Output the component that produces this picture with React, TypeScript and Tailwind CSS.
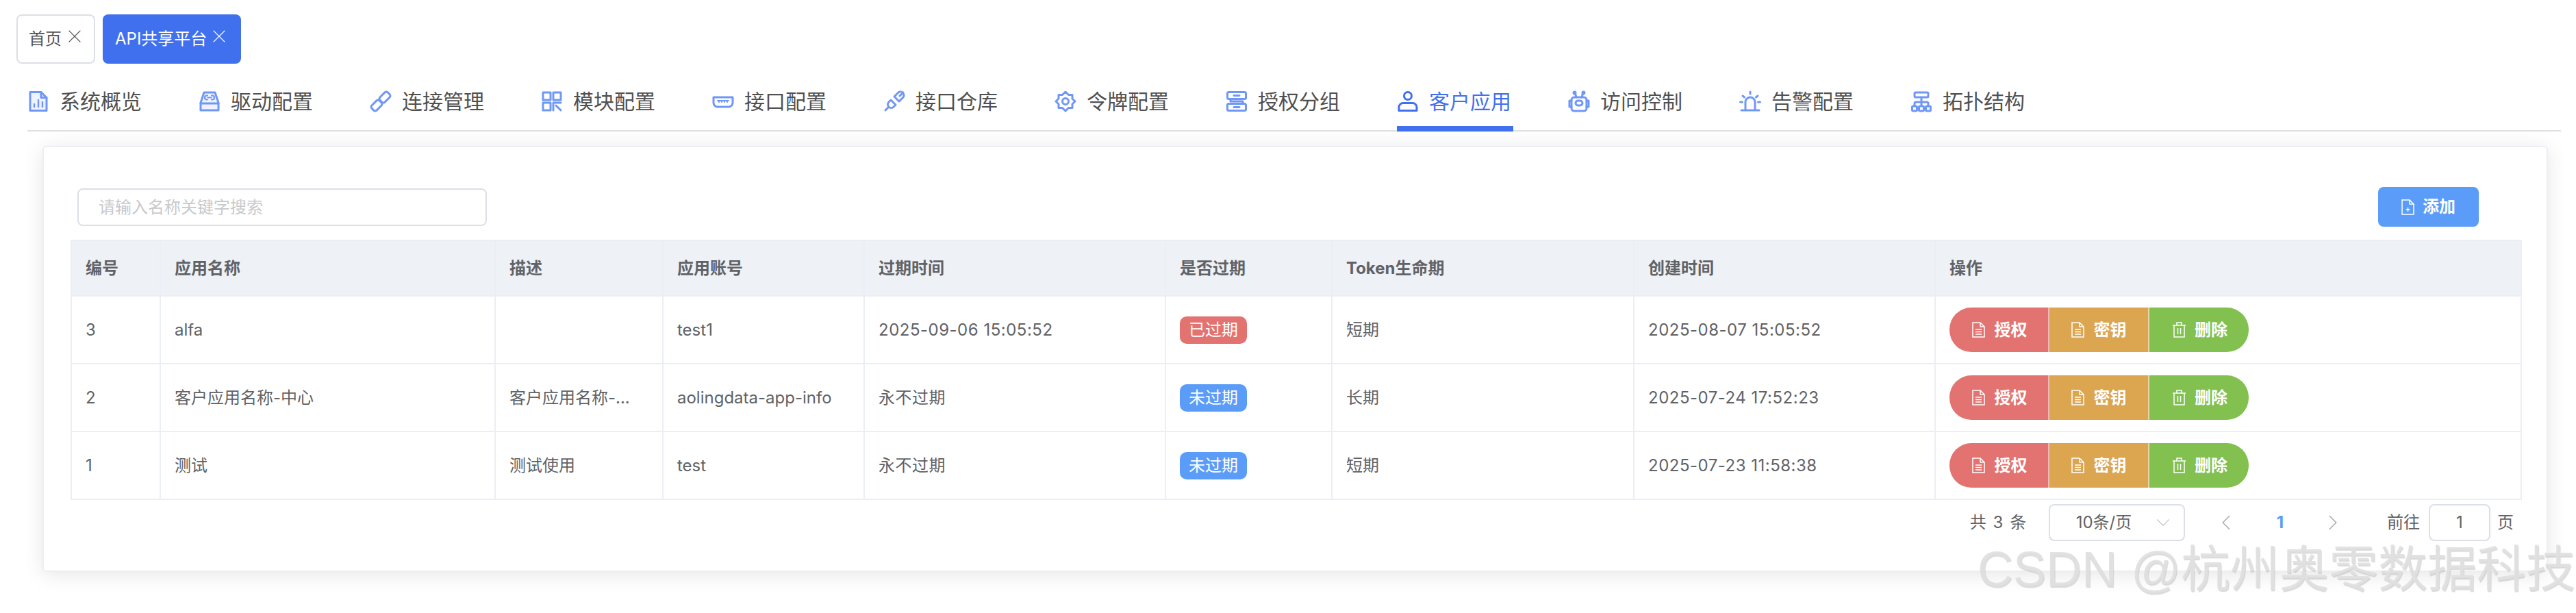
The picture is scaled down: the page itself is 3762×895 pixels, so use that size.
import React from 'react';
import { ChevronDown, ChevronLeft, ChevronRight, X } from 'lucide-react';

const IconBase: React.FC<{ children: React.ReactNode }> = ({ children }) => (
  <svg className="h-8 w-8 shrink-0" viewBox="0 0 32 32" fill="none" stroke="currentColor" strokeWidth={3} strokeLinecap="round" strokeLinejoin="round">
    {children}
  </svg>
);

const navItems: { label: string; icon: React.ReactNode }[] = [
  { label: '系统概览', icon: <IconBase><path d="M4 2.500h16l8 8V29.500H4z" fill="#eef3ff" /><path d="M20 2.500v8h8" /><path d="M10 24v-4M16 24v-10M22 24v-7" strokeWidth={2.4} /></IconBase> },
  { label: '驱动配置', icon: <IconBase><path d="M8 3h16l5 15v11H3V18z" fill="#eef3ff" /><path d="M3 19h26" /><path d="M13 7.500h-1a3 3 0 0 0 0 6h1M19 7.500h1a3 3 0 0 1 0 6h-1M13.500 10.500h5" strokeWidth={2.2} /></IconBase> },
  { label: '连接管理', icon: <IconBase><rect x="2" y="17" width="16" height="10" rx="3" transform="rotate(-45 10 22)" /><rect x="14" y="5" width="16" height="10" rx="3" transform="rotate(-45 22 10)" /></IconBase> },
  { label: '模块配置', icon: <IconBase><rect x="3" y="3" width="11" height="11" /><rect x="18" y="3" width="11" height="11" /><rect x="3" y="18" width="11" height="11" /><path d="M18 18h11M18 18v11M29 29l-7-7" /></IconBase> },
  { label: '接口配置', icon: <IconBase><path d="M2 10h28v8a6 6 0 0 1-6 6H8a6 6 0 0 1-6-6z" /><path d="M8 15h16M10 15v2M14 15v2M18 15v2M22 15v2" strokeWidth={2} /></IconBase> },
  { label: '接口仓库', icon: <IconBase><path d="M29 3l-5 5M22 3l-6 6 7 7 6-6a5 5 0 0 0-7-7z" /><path d="M3 29l5-5M8 24a5 5 0 0 1 0-7l3-3 7 7-3 3a5 5 0 0 1-7 0z" /></IconBase> },
  { label: '令牌配置', icon: <IconBase><path d="M16 2l4.500 4.500H26V12l4 4-4 4v5.500h-5.500L16 30l-4.500-4.500H6V20l-4-4 4-4V6.500h5.500z" /><circle cx="16" cy="16" r="4.500" /></IconBase> },
  { label: '授权分组', icon: <IconBase><rect x="2.500" y="2.500" width="27" height="10" rx="2" /><rect x="2.500" y="19.500" width="27" height="10" rx="2" /><path d="M7 12.500V16h18v3.500M12 7.500h8M12 24.500h8" /></IconBase> },
  { label: '客户应用', icon: <IconBase><circle cx="16" cy="8" r="5.500" /><path d="M3 29.500v-5a6 6 0 0 1 6-6h14a6 6 0 0 1 6 6v5z" /></IconBase> },
  { label: '访问控制', icon: <IconBase><path d="M10 3l2 7M22 3l-2 7" /><circle cx="9.500" cy="3.500" r="1.500" fill="currentColor" /><circle cx="22.500" cy="3.500" r="1.500" fill="currentColor" /><rect x="5" y="10" width="22" height="20" rx="4" /><rect x="11" y="15" width="10" height="7" rx="3.500" /><path d="M5 15H2v9h3M27 15h3v9h-3" /></IconBase> },
  { label: '告警配置', icon: <IconBase><path d="M3 29h26M9 29V17a7 7 0 0 1 14 0v12" /><path d="M16 2v3M5 8l2.500 2M27 8l-2.500 2M1.500 17h3M27.500 17h3" /></IconBase> },
  { label: '拓扑结构', icon: <IconBase><rect x="6" y="3" width="20" height="7" rx="1.500" /><path d="M16 10v12M6 23v-4a2 2 0 0 1 2-2h16a2 2 0 0 1 2 2v4" /><rect x="2.500" y="23" width="7" height="7" rx="1.500" /><rect x="12.500" y="23" width="7" height="7" rx="1.500" /><rect x="22.500" y="23" width="7" height="7" rx="1.500" /></IconBase> },
];

const DocIcon: React.FC<{ plus?: boolean }> = ({ plus }) => (
  <svg className="h-[23px] w-[19px] shrink-0" viewBox="0 0 19 23" fill="none" stroke="currentColor" strokeWidth={1.5}>
    <path d="M1 1h11l6 6v15H1z" />
    <path d="M12 1v6h6" />
    {plus ? <path d="M9.500 12v6M6.500 15h6" /> : <path d="M5 11h9M5 14.500h9M5 18h9" />}
  </svg>
);

const TrashIcon: React.FC = () => (
  <svg className="h-[23px] w-[21px] shrink-0" viewBox="0 0 21 23" fill="none" stroke="currentColor" strokeWidth={1.5}>
    <path d="M1 5h19M7 5V1h7v4M3 5v17h15V5M8.500 9v9M12.500 9v9" />
  </svg>
);

const ActionButtons: React.FC = () => (
  <div className="flex h-[65px] w-[437px] overflow-hidden rounded-[32px] text-[24px] font-semibold text-white">
    <button className="flex w-[146px] items-center justify-center gap-[14px] border-r-2 border-[#efb9b7] bg-[#e37370] pl-[2px]">
      <DocIcon />授权
    </button>
    <button className="flex w-[146px] items-center justify-center gap-[14px] border-r-2 border-[#edd2a7] bg-[#dca550]">
      <DocIcon />密钥
    </button>
    <button className="flex w-[145px] items-center justify-center gap-[12px] bg-[#82c050] pl-[2px]">
      <TrashIcon />删除
    </button>
  </div>
);

const rows = [
  { id: '3', name: 'alfa', desc: '', account: 'test1', expire: '2025-09-06 15:05:52', expired: true, life: '短期', created: '2025-08-07 15:05:52' },
  { id: '2', name: '客户应用名称-中心', desc: '客户应用名称-...', account: 'aolingdata-app-info', expire: '永不过期', expired: false, life: '长期', created: '2025-07-24 17:52:23' },
  { id: '1', name: '测试', desc: '测试使用', account: 'test', expire: '永不过期', expired: false, life: '短期', created: '2025-07-23 11:58:38' },
];

const headers = ['编号', '应用名称', '描述', '应用账号', '过期时间', '是否过期', 'Token生命期', '创建时间', '操作'];

const cell = 'whitespace-nowrap border-2 border-[#ebeef5] px-[20px] text-left';

export default function App() {
  return (
    <div className="relative h-[895px] w-[3762px] overflow-hidden bg-white font-[Inter,'Noto_Sans_CJK_SC',sans-serif] text-[24px] text-[#606266]">
      {/* tags */}
      <div className="flex gap-[11px] pl-[24px] pt-[21px]">
        <div className="flex h-[72px] w-[115px] items-center rounded-[8px] border-2 border-[#dcdfe6] pl-[16px] text-[#555]">
          首页<X className="mb-[9px] ml-[3px] h-[32px] w-[32px]" strokeWidth={0.8} />
        </div>
        <div className="flex h-[72px] w-[202px] items-center rounded-[8px] bg-[#4170ee] pl-[18px] text-white">
          API共享平台<X className="mb-[9px] ml-[2px] h-[32px] w-[32px]" strokeWidth={0.8} />
        </div>
      </div>

      {/* nav */}
      <div className="ml-[40px] mt-[24px] flex h-[75px] w-[3700px] gap-[80px] border-b-2 border-[#dfe0e3]">
        {navItems.map((item) => {
          const active = item.label === '客户应用';
          return (
            <div
              key={item.label}
              className={`flex h-[75px] w-[170px] items-start gap-[15px] border-b-8 pt-[12px] text-[30px] leading-[38px] ${active ? 'border-[#4170ee] text-[#4170ee]' : 'border-transparent text-[#505050]'}`}
            >
              <span className={`pt-[3px] ${active ? 'text-[#4170ee]' : 'text-[#6f97f7]'}`}>{item.icon}</span>
              <span className="whitespace-nowrap">{item.label}</span>
            </div>
          );
        })}
      </div>

      {/* card */}
      <div className="ml-[62px] mt-[21px] h-[622px] w-[3659px] rounded-[6px] border-2 border-[#ebeef5] bg-white px-[38px] pt-[58px] shadow-[0_4px_30px_rgba(0,0,0,0.1)]">
        <div className="flex items-center justify-between pl-[11px] pr-[61px]">
          <input
            className="h-[55px] w-[598px] rounded-[8px] border-2 border-[#dcdfe6] pl-[29px] text-[24px] outline-none placeholder:text-[#c8c9cc]"
            placeholder="请输入名称关键字搜索"
          />
          <button className="flex h-[58px] w-[147px] items-center justify-center gap-[12px] rounded-[8px] bg-[#5a9cf8] font-semibold text-white">
            <DocIcon plus />添加
          </button>
        </div>

        <table className="ml-[1px] mt-[19px] w-[3578px] table-fixed border-collapse">
          <colgroup>
            <col className="w-[130px]" />
            <col className="w-[489px]" />
            <col className="w-[245px]" />
            <col className="w-[294px]" />
            <col className="w-[440px]" />
            <col className="w-[243px]" />
            <col className="w-[441px]" />
            <col className="w-[440px]" />
            <col className="w-[856px]" />
          </colgroup>
          <thead>
            <tr className="h-[81px] bg-[#eef1f6]">
              {headers.map((h) => (
                <th key={h} className={`${cell} font-bold`}>{h}</th>
              ))}
            </tr>
          </thead>
          <tbody>
            {rows.map((row) => (
              <tr key={row.id} className="h-[99px]">
                <td className={cell}>{row.id}</td>
                <td className={cell}>{row.name}</td>
                <td className={cell}>{row.desc}</td>
                <td className={cell}>{row.account}</td>
                <td className={`${cell} tracking-[0.5px]`}>{row.expire}</td>
                <td className={cell}>
                  <span className={`inline-flex h-[40px] w-[98px] items-center justify-center rounded-[10px] text-white ${row.expired ? 'bg-[#e37370]' : 'bg-[#5a9cf8]'}`}>
                    {row.expired ? '已过期' : '未过期'}
                  </span>
                </td>
                <td className={cell}>{row.life}</td>
                <td className={`${cell} tracking-[0.5px]`}>{row.created}</td>
                <td className={cell}><ActionButtons /></td>
              </tr>
            ))}
          </tbody>
        </table>

        {/* pagination */}
        <div className="mt-[6px] flex h-[54px] w-[3580px] items-center justify-end pr-[11px]">
          <span className="tracking-[1.5px]">共 3 条</span>
          <div className="ml-[31px] flex h-[54px] w-[199px] items-center rounded-[8px] border-2 border-[#dcdfe6] pl-[38px]">
            10条/页
            <ChevronDown className="ml-[29px] h-[34px] w-[34px] text-[#c0c4cc]" strokeWidth={0.8} />
          </div>
          <ChevronLeft className="ml-[41px] h-[38px] w-[38px] text-[#a8abb2]" strokeWidth={1} />
          <span className="ml-[55px] font-bold text-[#5a9cf8]">1</span>
          <ChevronRight className="ml-[53px] h-[38px] w-[38px] text-[#a8abb2]" strokeWidth={1} />
          <span className="ml-[60px]">前往</span>
          <div className="ml-[13px] flex h-[54px] w-[90px] items-center justify-center rounded-[8px] border-2 border-[#dcdfe6]">1</div>
          <span className="ml-[10px]">页</span>
        </div>
      </div>

      {/* watermark */}
      <div className="pointer-events-none absolute left-[2888px] top-[786px] whitespace-nowrap font-['Liberation_Sans','Noto_Sans_CJK_SC',sans-serif] text-[72px] leading-[90px] text-[#e0e0e0]/90 [text-shadow:1px_2px_1px_rgba(150,150,150,0.35)]">
        CSDN @杭州奥零数据科技
      </div>
    </div>
  );
}
